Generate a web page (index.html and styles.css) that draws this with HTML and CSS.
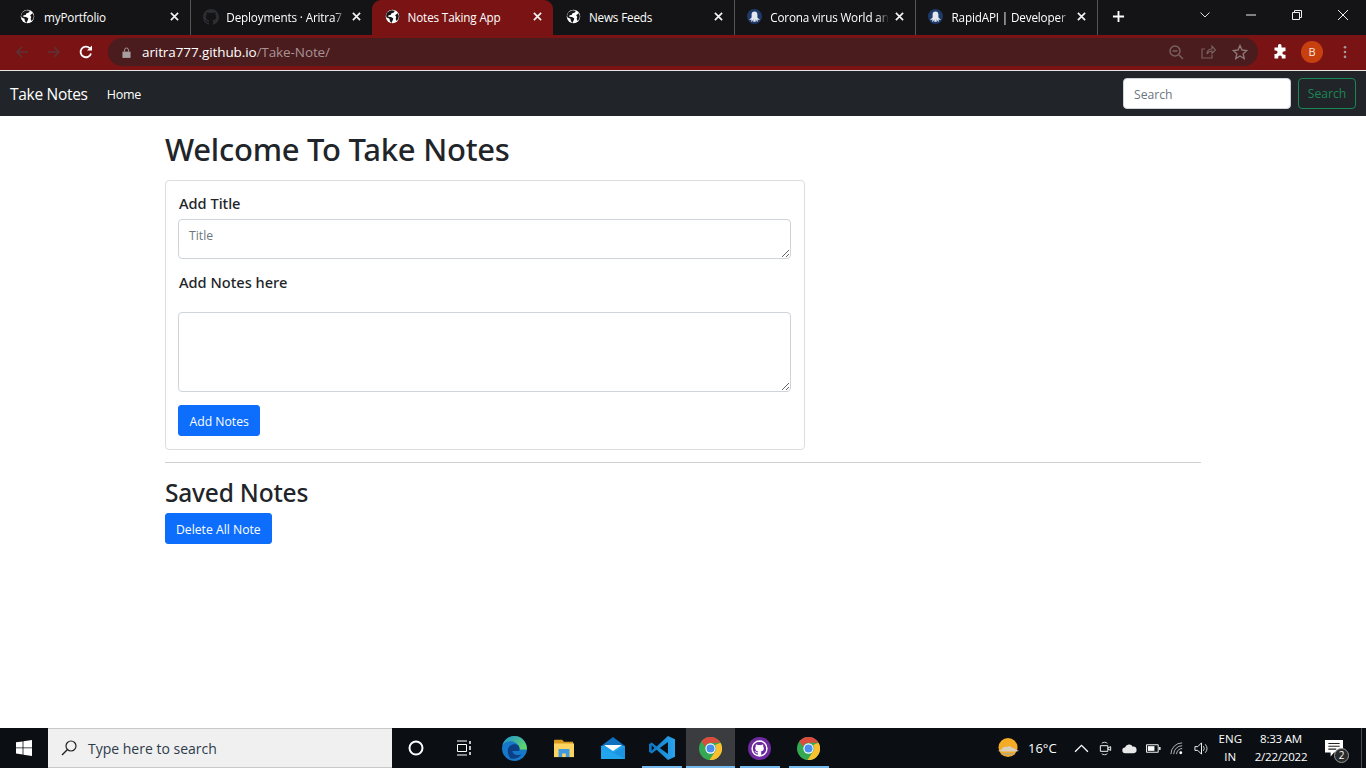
FILE: index.html
```html
<!DOCTYPE html>
<html>
<head>
  <title>Notes Taking App</title>
  <meta charset="utf-8">
  <link rel="stylesheet" href="styles.css">
</head>
<body>
<svg class="sprite" width="0" height="0">
  <defs>
    <linearGradient id="edge-top" x1="0" y1="0" x2="1" y2="0.6">
      <stop offset="0" stop-color="#1a8fd8"/>
      <stop offset="1" stop-color="#5fd36c"/>
    </linearGradient>
    <linearGradient id="vs-side" x1="0" y1="0" x2="1" y2="0">
      <stop offset="0" stop-color="#0b76c4"/>
      <stop offset="1" stop-color="#2aa4ec"/>
    </linearGradient>
  </defs>
  <symbol id="globe" viewBox="0 0 16 16">
    <circle cx="8" cy="8" r="7.200" fill="#fff"/>
    <path d="M2.600 3.400 6.400 1.200 10.400 1.800 9.600 3.800 7 4.600 6 6.400 3.800 6.600 3.400 8.200 6.400 8.400 8.800 9.800 8.400 11.800 6.800 14.800 5.200 12.800 4.800 10.400 1.400 8.800 1.200 6.400Z" fill="#17171a"/>
    <path d="M10.800 6.600 13.600 4.600 14.800 7.400 14.200 10.600 12.200 12.800 11.400 10.400 12 8.400Z" fill="#17171a"/>
  </symbol>
  <symbol id="octo" viewBox="0 0 16 16">
    <circle cx="8" cy="8" r="8" fill="#1d3a6b"/>
    <path d="M8 2.600c-2 0-3.100 1.400-3.100 3.200v2.700c0 .7-.6 1.400-1.100 1.700l-1.200.6v.9l2.300-.4-.7 2h1.300L6.800 11l-.2 2.700h2.800L9.200 11l1.300 2.300h1.300l-.7-2 2.300.4v-.9l-1.200-.6c-.5-.3-1.100-1-1.100-1.700V5.800c0-1.800-1.100-3.200-3.100-3.200z" fill="#e4e9f1"/>
  </symbol>
  <symbol id="mark" viewBox="0 0 16 16">
    <path fill="currentColor" d="M8 0C3.580 0 0 3.580 0 8c0 3.540 2.290 6.530 5.470 7.590.4.070.55-.17.55-.38 0-.19-.01-.82-.01-1.490-2.010.37-2.530-.49-2.690-.94-.09-.23-.48-.94-.82-1.130-.28-.15-.68-.52-.01-.53.63-.01 1.080.58 1.230.82.72 1.210 1.870.87 2.330.66.070-.52.28-.87.51-1.070-1.780-.2-3.640-.89-3.640-3.950 0-.87.31-1.590.82-2.150-.08-.2-.36-1.020.08-2.120 0 0 .67-.21 2.200.82.64-.18 1.320-.27 2-.27.68 0 1.360.09 2 .27 1.530-1.040 2.200-.82 2.200-.82.44 1.100.16 1.920.08 2.120.51.56.82 1.270.82 2.150 0 3.070-1.870 3.750-3.650 3.950.29.25.54.73.54 1.480 0 1.070-.01 1.930-.01 2.200 0 .21.15.46.55.38A8.013 8.013 0 0016 8c0-4.420-3.580-8-8-8z"/>
  </symbol>
  <symbol id="chrome" viewBox="0 0 24 24">
    <circle cx="12" cy="12" r="12" fill="#34a853"/>
    <path d="M12 0a12 12 0 0 1 10.400 6H12a6 6 0 0 0-5.700 4.100L2.600 4.400A12 12 0 0 1 12 0z" fill="#dd4b3e"/>
    <path d="M22.400 6A12 12 0 0 1 11 24l4.900-7.600A6 6 0 0 0 16.800 8.400z" fill="#fbc02d"/>
    <circle cx="12" cy="12" r="5.400" fill="#fff"/>
    <circle cx="12" cy="12" r="4.200" fill="#4a8cf0"/>
  </symbol>
  <symbol id="close" viewBox="0 0 10 10">
    <path d="M1 1 9 9M9 1 1 9" stroke="currentColor" stroke-width="1.900" fill="none"/>
  </symbol>
</svg>

<div class="tabstrip">
  <div class="tab first">
    <svg class="tab-icon"><use href="#globe"/></svg>
    <span class="tab-title plain">myPortfolio</span>
    <svg class="tab-close"><use href="#close"/></svg>
  </div>
  <div class="tab sep">
    <svg class="tab-icon gh"><use href="#mark"/></svg>
    <span class="tab-title">Deployments · Aritra7</span>
    <svg class="tab-close"><use href="#close"/></svg>
  </div>
  <div class="tab active">
    <svg class="tab-icon"><use href="#globe"/></svg>
    <span class="tab-title plain">Notes Taking App</span>
    <svg class="tab-close"><use href="#close"/></svg>
  </div>
  <div class="tab">
    <svg class="tab-icon"><use href="#globe"/></svg>
    <span class="tab-title plain">News Feeds</span>
    <svg class="tab-close"><use href="#close"/></svg>
  </div>
  <div class="tab sep">
    <svg class="tab-icon"><use href="#octo"/></svg>
    <span class="tab-title">Corona virus World an</span>
    <svg class="tab-close"><use href="#close"/></svg>
  </div>
  <div class="tab sep sep-right">
    <svg class="tab-icon"><use href="#octo"/></svg>
    <span class="tab-title">RapidAPI | Developer</span>
    <svg class="tab-close"><use href="#close"/></svg>
  </div>
  <svg class="new-tab" viewBox="0 0 14 14"><path d="M7 1v12M1 7h12" stroke="#fff" stroke-width="2"/></svg>
  <div class="window-controls">
    <svg class="win-btn" viewBox="0 0 12 12"><path d="M1.500 3.500 6 8l4.500-4.500" stroke="#ddd" fill="none"/></svg>
    <svg class="win-btn" viewBox="0 0 12 12"><path d="M1 6h10" stroke="#eee"/></svg>
    <svg class="win-btn" viewBox="0 0 12 12"><path d="M1.500 3.500h7v7h-7zM3.500 3.500v-2h7v7h-2" stroke="#eee" fill="none"/></svg>
    <svg class="win-btn" viewBox="0 0 12 12"><path d="M1 1l10 10M11 1 1 11" stroke="#eee" fill="none"/></svg>
  </div>
</div>

<div class="toolbar">
  <svg class="tool-icon" viewBox="0 0 16 16"><path d="M14 8H3M8 3 3 8l5 5" stroke="#5e3234" stroke-width="1.700" fill="none"/></svg>
  <svg class="tool-icon" viewBox="0 0 16 16"><path d="M2 8h11M8 3l5 5-5 5" stroke="#5e3234" stroke-width="1.700" fill="none"/></svg>
  <svg class="tool-icon" viewBox="0 0 16 16"><path d="M13 9.500A5.300 5.300 0 1 1 11.700 4.200" stroke="#fff" stroke-width="1.800" fill="none"/><path d="M14 1.500v5H9z" fill="#fff"/></svg>
  <div class="omnibox">
    <svg class="lock" viewBox="0 0 10 12"><path d="M2.800 5V3.200a2.200 2.200 0 0 1 4.400 0V5" fill="none" stroke="#a8a0a0"/><path d="M.5 5h9v7h-9z" fill="#a8a0a0"/></svg>
    <span class="url">aritra777.github.io<span class="url-path">/Take-Note/</span></span>
    <div class="omni-actions">
      <svg class="omni-icon" viewBox="0 0 16 16"><circle cx="7" cy="7" r="5" stroke="#78605f" stroke-width="1.500" fill="none"/><path d="M11 11l4 4M4.500 7h5" stroke="#78605f" stroke-width="1.500"/></svg>
      <svg class="omni-icon" viewBox="0 0 16 16"><path d="M5 5H2v9h10v-3M7 10c0-3 2-5 5-5V2l3.500 4L12 9.500V7c-2 0-4 1-5 3z" stroke="#78605f" stroke-width="1.200" fill="none"/></svg>
      <svg class="omni-icon" viewBox="0 0 16 16"><path d="M8 1.500 10 6l4.800.5-3.600 3.200 1 4.800L8 12l-4.200 2.500 1-4.800L1.200 6.500 6 6z" stroke="#8b7776" stroke-width="1.400" fill="none"/></svg>
    </div>
  </div>
  <svg class="puzzle" viewBox="0 0 16 16"><path d="M6 1.500a1.800 1.800 0 0 1 3.500 0V3.500h4v3.700h-1.300a1.800 1.800 0 0 0 0 3.600h1.300v3.700H9.800v-1.300a1.800 1.800 0 0 0-3.600 0v1.300H2.500V10h1.200a1.800 1.800 0 0 0 0-3.600H2.500V3.500H6z" fill="#fff"/></svg>
  <div class="avatar">B</div>
  <svg class="dots" viewBox="0 0 4 16"><circle cx="2" cy="2.500" r="1.500" fill="#a89a9a"/><circle cx="2" cy="8" r="1.500" fill="#a89a9a"/><circle cx="2" cy="13.500" r="1.500" fill="#a89a9a"/></svg>
</div>

<nav class="navbar">
  <a class="brand">Take Notes</a>
  <a class="nav-link">Home</a>
  <form class="nav-search">
    <input class="search-input" type="search" placeholder="Search">
    <button class="btn-outline" type="button">Search</button>
  </form>
</nav>

<main class="content">
  <h1>Welcome To Take Notes</h1>
  <div class="card">
    <label class="field-label" for="title">Add Title</label>
    <textarea class="field" id="title" placeholder="Title"></textarea>
    <label class="field-label notes-label" for="notes">Add Notes here</label>
    <textarea class="field notes" id="notes"></textarea>
    <button class="btn-primary" type="button">Add Notes</button>
  </div>
  <hr>
  <h2>Saved Notes</h2>
  <button class="btn-primary" type="button">Delete All Note</button>
</main>

<footer class="taskbar">
  <div class="start">
    <svg viewBox="0 0 16 16" width="16" height="16"><path d="M0 2.300 6.600 1.400V7.500H0zM7.400 1.300 16 0V7.500H7.400zM0 8.300H6.600V14.500L0 13.600zM7.400 8.300H16V16L7.400 14.700z" fill="#fff"/></svg>
  </div>
  <div class="task-search">
    <svg viewBox="0 0 16 16" width="16" height="16"><circle cx="10" cy="6" r="5" stroke="#222" stroke-width="1.200" fill="none"/><path d="M6.500 9.500 1 15" stroke="#222" stroke-width="1.400"/></svg>
    <span>Type here to search</span>
  </div>
  <div class="task-item cortana">
    <svg viewBox="0 0 16 16" width="16" height="16"><circle cx="8" cy="8" r="6.500" stroke="#fff" stroke-width="2" fill="none"/></svg>
  </div>
  <div class="task-item taskview">
    <svg viewBox="0 0 16 16" width="16" height="16"><path d="M1 1h10M1 15h10M1.500 4.500h9v7h-9z" stroke="#fff" fill="none"/><path d="M14 1v3M14 6v4M14 12v3" stroke="#fff" stroke-width="1.500"/></svg>
  </div>
  <div class="task-item">
    <svg viewBox="0 0 24 24" width="25" height="25">
      <circle cx="12" cy="12" r="12" fill="#1678c8"/>
      <path d="M24 13C24 5.800 18.600 0 12 0 6.500 0 1.800 3.700.5 8.800 3 5.500 7.500 4.500 11 5.500c4 1.200 6 4.500 5 7.500h8z" fill="url(#edge-top)"/>
      <path d="M5.500 14c0-3.500 3-6 6.500-6 3 0 5 1.800 5 4.500 0 1-.5 1.500-1 2h-6c0 3 4 5 9 3-3 3.500-6 4.800-10 4.300C7 21 5.500 17.500 5.500 14z" fill="#0c3f86"/>
    </svg>
  </div>
  <div class="task-item">
    <svg viewBox="0 0 24 22" width="22" height="20">
      <path d="M1 3a1 1 0 0 1 1-1h8l2 2h10v3H1z" fill="#d99a1e"/>
      <path d="M1 6h22v15H1z" fill="#fcd462"/>
      <path d="M6 12h12v9h-4v-4h-4v4H6z" fill="#3f9ae0"/>
    </svg>
  </div>
  <div class="task-item">
    <svg viewBox="0 0 24 22" width="24" height="22">
      <path d="M0 9 12 0l12 9v13H0z" fill="#0f6fc0"/>
      <path d="M0 9h24v13H0z" fill="#22a4ee"/>
      <path d="M3 8h18l-9 6z" fill="#fff"/>
      <path d="M0 9l24 13V9l-12 7z" fill="#1789d8" opacity=".6"/>
    </svg>
  </div>
  <div class="task-item open">
    <svg viewBox="0 0 24 24" width="26" height="26">
      <path d="M17.500 1 24 4v16l-6.500 3L7 13.500 2.500 17 0 15.500V8.500L2.500 7 7 10.500z" fill="url(#vs-side)"/>
      <path d="M17.500 6.500 10 12l7.500 5.500z" fill="#0b0f14"/>
      <path d="M2.500 9.500v5L5 12z" fill="#0b0f14"/>
    </svg>
  </div>
  <div class="task-item open current">
    <svg width="23" height="23"><use href="#chrome"/></svg>
  </div>
  <div class="task-item open">
    <svg viewBox="0 0 24 24" width="23" height="23"><circle cx="12" cy="12" r="12" fill="#6e2a9e"/><circle cx="12" cy="12" r="8.500" fill="#fff"/><svg x="5" y="5" width="14" height="14" viewBox="0 0 16 16" color="#6e2a9e"><use href="#mark"/></svg></svg>
  </div>
  <div class="task-item open">
    <svg width="23" height="23"><use href="#chrome"/></svg>
  </div>

  <div class="tray">
    <div class="weather">
      <svg viewBox="0 0 22 22" width="22" height="22">
        <circle cx="11" cy="10.500" r="9.500" fill="#f4ab25"/>
        <path d="M0 14c3-.3 4-1 5-2.200 1-1.800 3.200-2.400 5-1.800 1.200-1.200 4-1 5 .8 2 0 3 1.600 7 3.200-3 .6-6 .6-9 .6-4.500 0-9-.1-13-.6z" fill="#d9cfbe"/>
        <path d="M4 16h14c-.8 1-1.800 1.600-3 2H7.500C6 17.600 4.800 17 4 16z" fill="#c2a878"/>
      </svg>
      <span>16°C</span>
    </div>
    <svg class="tray-icon" viewBox="0 0 14 14"><path d="M1 10l6-6 6 6" stroke="#fff" stroke-width="1.200" fill="none"/></svg>
    <svg class="tray-icon" viewBox="0 0 14 16"><path d="M3 2.500c1-1.500 5-1.500 6 0M3 13.500c1 1.500 5 1.500 6 0" stroke="#ddd" fill="none"/><path d="M1.500 5h8v6h-8zM9.500 7.500l3-1.500v4l-3-1.500" stroke="#fff" fill="none"/></svg>
    <svg class="tray-icon" viewBox="0 0 16 12"><path d="M3.500 11a3 3 0 0 1-.3-6A4.500 4.500 0 0 1 11.500 4 3.500 3.500 0 0 1 12.500 11z" fill="#e8e8e8"/></svg>
    <svg class="tray-icon" viewBox="0 0 16 10"><path d="M.5 1h12.500v8H.5z" stroke="#fff" fill="none"/><path d="M2 2.500h7v5H2z" fill="#fff"/><path d="M14 3.500h1.500v3H14z" fill="#fff"/></svg>
    <svg class="tray-icon" viewBox="0 0 16 14"><path d="M1 13A12 12 0 0 1 13 1M4 13a9 9 0 0 1 9-9M7 13a6 6 0 0 1 6-6" stroke="#bbb" fill="none"/><circle cx="11.500" cy="11.500" r="1.500" fill="#fff"/></svg>
    <svg class="tray-icon" viewBox="0 0 16 14"><path d="M1 5h3l4-4v12L4 9H1z" stroke="#fff" fill="none"/><path d="M10 4.500a4 4 0 0 1 0 5M12 2.500a7 7 0 0 1 0 9" stroke="#ddd" fill="none"/></svg>
    <div class="lang">ENG<br>IN</div>
    <div class="clock">8:33 AM<br>2/22/2022</div>
    <div class="notify">
      <svg viewBox="0 0 16 15" width="18" height="17"><path d="M0 0h16v11H8l-3 3.500V11H0z" fill="#fff"/><path d="M3 3h10M3 5.500h10M3 8h7" stroke="#222"/></svg>
      <span class="badge">2</span>
    </div>
    <div class="show-desktop"></div>
  </div>
</footer>
</body>
</html>
```

FILE: styles.css
```css
* {
  box-sizing: border-box;
}

html, body {
  height: 100%;
}

body {
  margin: 0;
  height: 768px;
  overflow: hidden;
  display: flex;
  flex-direction: column;
  font-family: "Open Sans", "Noto Sans", sans-serif;
  background-color: #fff;
  color: #212529;
}

.sprite {
  position: absolute;
}

/* browser tabs */
.tabstrip {
  height: 35px;
  flex: none;
  display: flex;
  align-items: stretch;
  padding-left: 9px;
  background-color: #141416;
}

.tab {
  width: 181.3px;
  flex: none;
  display: flex;
  align-items: center;
  padding: 0 11px 2px 12px;
  color: #fff;
  font-size: 11.7px;
  border-left: 1px solid transparent;
}

.tab.first {
  padding-left: 10px;
}

.tab.sep {
  border-left-color: #55565a;
}

.tab.sep-right {
  box-shadow: 1px 0 0 #55565a;
}

.tab.active {
  background-color: #7a1414;
  border-radius: 9px 9px 0 0;
}

.tab-icon {
  width: 15px;
  height: 15px;
  flex: none;
  margin-right: 8px;
}

.tab.first .tab-icon {
  margin-right: 9px;
}

.tab-icon.gh {
  color: #2c2e33;
  width: 16px;
  height: 16px;
  margin-right: 7px;
}

.tab-title {
  flex: 1;
  min-width: 0;
  white-space: nowrap;
  letter-spacing: -0.15px;
  -webkit-mask-image: linear-gradient(to right, #000 90%, transparent);
  mask-image: linear-gradient(to right, #000 90%, transparent);
}

.tab-title.plain {
  -webkit-mask-image: none;
  mask-image: none;
}

.tab-close {
  width: 9px;
  height: 9px;
  flex: none;
  margin-left: 6px;
  color: #f2f2f2;
}

.new-tab {
  width: 13px;
  height: 13px;
  flex: none;
  align-self: center;
  margin: 0 0 2px 15px;
}

.window-controls {
  margin-left: auto;
  display: flex;
  align-items: center;
  gap: 34px;
  padding: 0 17px 6px 0;
}

.win-btn {
  width: 12px;
  height: 12px;
}

/* address bar */
.toolbar {
  height: 35px;
  flex: none;
  display: flex;
  align-items: center;
  padding: 0 12px 1px 14px;
  background-color: #7a1414;
}

.tool-icon {
  width: 16px;
  height: 16px;
  flex: none;
  margin-right: 16px;
}

.omnibox {
  width: 1150px;
  height: 28px;
  flex: none;
  margin-left: -2px;
  display: flex;
  align-items: center;
  padding: 0 10px 0 14px;
  border-radius: 14px;
  background-color: #4b1c1e;
  color: #fff;
  font-size: 13.5px;
}

.lock {
  width: 9px;
  height: 11px;
  margin-right: 11px;
}

.url {
  letter-spacing: -0.1px;
}

.url-path {
  color: #a89393;
}

.omni-actions {
  margin-left: auto;
  display: flex;
  gap: 16px;
}

.omni-icon {
  width: 16px;
  height: 16px;
}

.puzzle {
  width: 16px;
  height: 16px;
  margin-left: 14px;
}

.avatar {
  width: 22px;
  height: 22px;
  margin-left: 13px;
  border-radius: 50%;
  background-color: #c8400f;
  color: #f5e6dc;
  font-size: 11px;
  line-height: 22px;
  text-align: center;
}

.dots {
  width: 4px;
  height: 14px;
  margin-left: 20px;
}

/* page navbar */
.navbar {
  height: 46px;
  flex: none;
  display: flex;
  align-items: center;
  padding: 0 10px;
  border-top: 1px solid #e6e6e6;
  background-color: #212529;
}

.brand {
  color: #fff;
  font-size: 15.5px;
  letter-spacing: -0.3px;
}

.nav-link {
  margin-left: 19px;
  padding-top: 1px;
  color: #fff;
  font-size: 12.5px;
  letter-spacing: -0.2px;
}

.nav-search {
  margin-left: auto;
  display: flex;
  gap: 7px;
}

.search-input {
  width: 168px;
  height: 31px;
  padding: 1px 10px 0;
  border: 1px solid #ced4da;
  border-radius: 4px;
  font-family: inherit;
  font-size: 12.2px;
  outline: none;
}

.search-input::placeholder,
.field::placeholder {
  color: #6c757d;
  opacity: 1;
}

.btn-outline {
  width: 58px;
  height: 31px;
  padding: 0;
  border: 1px solid #198754;
  border-radius: 4px;
  background: none;
  color: #198754;
  font-family: inherit;
  font-size: 12.2px;
}

/* main content */
.content {
  flex: 1;
  width: 1036px;
  margin-left: 165px;
}

h1 {
  margin: 11px 0 9px;
  font-family: "Noto Sans", "Open Sans", sans-serif;
  font-size: 31px;
  line-height: 44px;
  font-weight: 500;
  letter-spacing: -0.25px;
}

.card {
  width: 640px;
  padding: 12px 13px 13px 12px;
  border: 1px solid #dcdddf;
  border-radius: 4px;
}

.field-label {
  display: block;
  padding-left: 1px;
  font-family: "Noto Sans", "Open Sans", sans-serif;
  font-size: 14.6px;
  line-height: 20px;
  font-weight: 500;
  margin-bottom: 6px;
}

.notes-label {
  margin: 13px 0 20px;
}

.field {
  display: block;
  width: 100%;
  height: 40px;
  padding: 7px 10px 5px;
  border: 1px solid #ced4da;
  border-radius: 4px;
  font-family: inherit;
  font-size: 12.2px;
  outline: none;
}

.field.notes {
  height: 80px;
}

.btn-primary {
  display: block;
  height: 31px;
  padding: 1px 10px 0;
  border: 1px solid #0d6efd;
  border-radius: 3px;
  background-color: #0d6efd;
  color: #fff;
  font-family: inherit;
  font-size: 12.2px;
}

.card .btn-primary {
  margin-top: 13px;
  padding: 1px 10.5px 0;
}

hr {
  margin: 12px 0 0;
  border: 0;
  border-top: 1px solid #cfcfcf;
}

h2 {
  margin: 14px 0 4px;
  font-family: "Noto Sans", "Open Sans", sans-serif;
  font-size: 24.5px;
  line-height: 32px;
  font-weight: 500;
  letter-spacing: -0.2px;
}

/* windows taskbar */
.taskbar {
  height: 40px;
  flex: none;
  display: flex;
  align-items: stretch;
  background-color: #0b0f14;
  color: #fff;
}

.start {
  width: 48px;
  display: flex;
  align-items: center;
  justify-content: center;
}

.task-search {
  width: 344px;
  display: flex;
  align-items: center;
  gap: 11px;
  padding-left: 13px;
  border: 1px solid #c9c9c9;
  border-width: 1px 0;
  background-color: #f0f0f0;
  color: #2d3b4a;
  font-size: 14px;
}

.task-item {
  width: 49px;
  display: flex;
  align-items: center;
  justify-content: center;
}

.task-item.cortana {
  width: 48px;
}

.task-item.taskview {
  width: 47px;
  margin-right: 3px;
}

.task-item.open {
  background-image: linear-gradient(#76b9ed, #76b9ed);
  background-repeat: no-repeat;
  background-position: center bottom;
  background-size: 40px 2px;
}

.task-item.current {
  background-color: #3a3c3f;
  background-size: 100% 2px;
}

.tray {
  margin-left: auto;
  display: flex;
  align-items: center;
  font-size: 12px;
}

.weather {
  display: flex;
  align-items: center;
  gap: 9px;
  margin-right: 17px;
  font-size: 13px;
}

.tray-icon {
  width: 15px;
  height: 15px;
  margin-right: 9px;
}

.lang,
.clock {
  text-align: center;
  line-height: 18px;
  font-size: 11.5px;
}

.lang {
  margin-left: 1px;
}

.clock {
  width: 80px;
  margin-left: -1px;
  letter-spacing: -0.2px;
}

.notify {
  position: relative;
  width: 24px;
  margin-left: 4px;
  display: flex;
  align-items: center;
}

.badge {
  position: absolute;
  left: 9px;
  top: 8px;
  width: 15px;
  height: 15px;
  border-radius: 50%;
  border: 1px solid #9a9a9a;
  background-color: #2a2a2a;
  font-size: 10px;
  line-height: 13px;
  text-align: center;
}

.show-desktop {
  width: 1px;
  height: 40px;
  margin-left: 12px;
  margin-right: 4px;
  background-color: #4a4d50;
}
```
